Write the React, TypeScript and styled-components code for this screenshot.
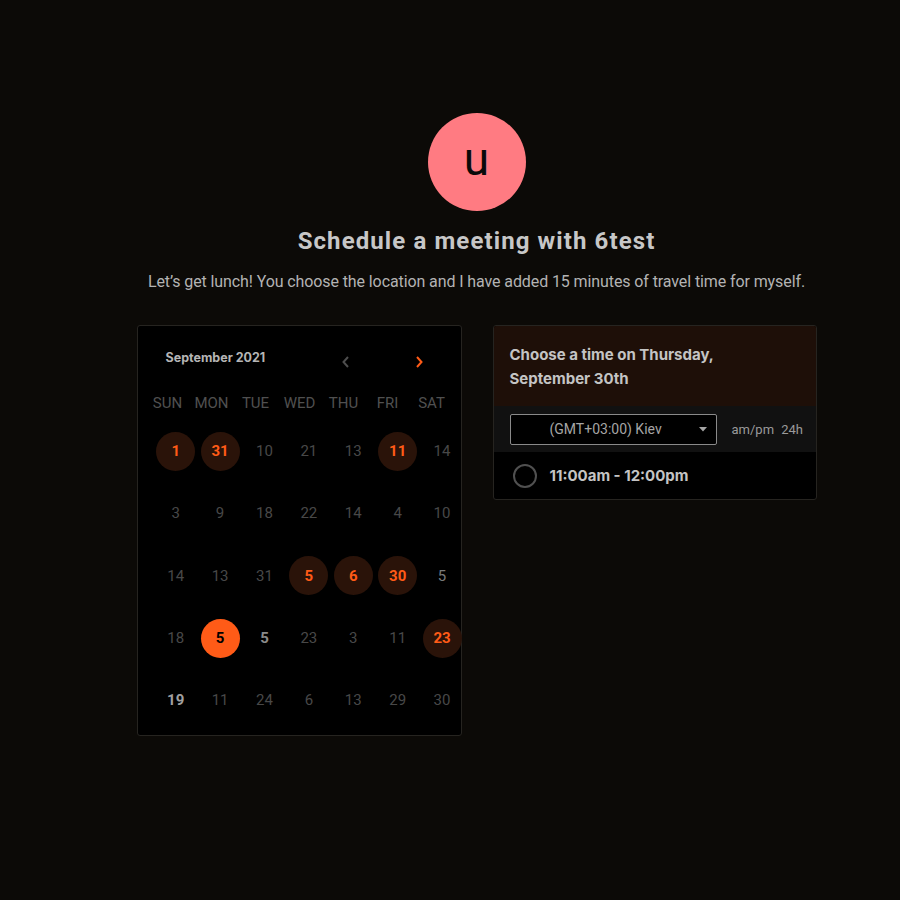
import React from "react";
import styled, { createGlobalStyle } from "styled-components";

const Global = createGlobalStyle`
  html, body { margin: 0; padding: 0; background: #0c0a07; }
  body { font-family: Roboto, "Liberation Sans", sans-serif; min-height: 900px; }
`;

const Page = styled.main`
  box-sizing: border-box;
  width: 900px;
  padding: 113px 0 0 53px;
  display: flex;
  flex-direction: column;
  align-items: center;
`;

const Avatar = styled.div`
  width: 98px;
  height: 98px;
  border-radius: 50%;
  background: #ff7b82;
  color: #0a0a0a;
  display: flex;
  align-items: center;
  justify-content: center;
  font-family: Roboto, sans-serif;
  font-size: 46px;
  line-height: 1;
  padding-bottom: 6px;
  box-sizing: border-box;
`;

const Title = styled.h1`
  margin: 15px 0 0;
  font-family: Roboto, sans-serif;
  font-weight: 700;
  font-size: 24px;
  letter-spacing: 1.1px;
  line-height: 30px;
  color: #c7c7c7;
`;

const Subtitle = styled.p`
  margin: 15px 0 0;
  font-size: 16px;
  letter-spacing: -0.1px;
  line-height: 22px;
  color: #b3b3b3;
`;

const Panels = styled.div`
  margin-top: 32px;
  display: flex;
  align-items: flex-start;
  gap: 31px;
`;

const Calendar = styled.section`
  box-sizing: border-box;
  width: 325px;
  height: 411px;
  background: #000;
  border: 1px solid #262420;
  border-radius: 3px;
  padding-top: 22px;
`;

const CalHeader = styled.div`
  display: flex;
  align-items: center;
  height: 24px;
  padding-left: 28px;
`;

const Month = styled.div`
  font-family: Inter, sans-serif;
  font-weight: 700;
  font-size: 12.5px;
  color: #b5b5b5;
  width: 172px;
  margin-top: -5px;
`;

const NavBtn = styled.div<{ $ml: number }>`
  width: 16px;
  height: 16px;
  display: flex;
  align-items: center;
  justify-content: center;
  margin-left: ${(p) => p.$ml}px;
  margin-top: 3px;
`;

const Weekdays = styled.div`
  display: grid;
  grid-template-columns: repeat(7, 44px);
  padding-left: 8px;
  margin-top: 21px;
`;

const Weekday = styled.div`
  text-align: center;
  font-size: 15px;
  line-height: 20px;
  color: #505050;
`;

const Days = styled.div`
  display: grid;
  grid-template-columns: repeat(7, 44.4px);
  grid-auto-rows: 62.3px;
  padding-left: 16px;
  margin-top: 7px;
`;

type Kind = "dim" | "hl" | "sel" | "light" | "mid" | "bold";

const Day = styled.div`
  display: flex;
  align-items: center;
  justify-content: center;
`;

const DayNum = styled.span<{ $k: Kind }>`
  width: 39px;
  height: 39px;
  border-radius: 50%;
  display: flex;
  align-items: center;
  justify-content: center;
  font-size: 15px;
  font-weight: ${(p) => (p.$k === "dim" || p.$k === "light" ? 400 : 700)};
  background: ${(p) =>
    p.$k === "hl" ? "#2a1309" : p.$k === "sel" ? "#ff5b17" : "transparent"};
  color: ${(p) =>
    p.$k === "hl"
      ? "#ff5b17"
      : p.$k === "sel"
      ? "#000"
      : p.$k === "light"
      ? "#7a7a7a"
      : p.$k === "mid"
      ? "#8a8a8a"
      : p.$k === "bold"
      ? "#a0a0a0"
      : "#484848"};
`;

const TimePanel = styled.section`
  box-sizing: border-box;
  width: 324px;
  border: 1px solid #262420;
  border-radius: 3px;
  overflow: hidden;
  background: #000;
`;

const TimeHeader = styled.div`
  background: #1e0f08;
  padding: 17px 16px 15px;
  font-family: Inter, sans-serif;
  font-weight: 700;
  font-size: 15px;
  line-height: 24px;
  color: #c4c4c4;
`;

const TzRow = styled.div`
  background: #111111;
  height: 46px;
  display: flex;
  align-items: center;
  padding-left: 16px;
`;

const Select = styled.div`
  box-sizing: border-box;
  width: 207px;
  height: 31px;
  border: 1px solid #8a8a8a;
  border-radius: 2px;
  background: #000;
  display: flex;
  align-items: center;
  padding-left: 39px;
  padding-right: 9px;
  font-size: 14px;
  color: #a5a5a5;
`;

const SelectText = styled.span`
  flex: 1;
`;

const Format = styled.div`
  margin-left: 15px;
  font-size: 13px;
  color: #9a9a9a;
  word-spacing: 4px;
`;

const Slot = styled.div`
  height: 47px;
  display: flex;
  align-items: center;
  padding-left: 19px;
  gap: 13px;
`;

const Radio = styled.span`
  box-sizing: border-box;
  width: 24px;
  height: 24px;
  border-radius: 50%;
  border: 2px solid #505050;
`;

const SlotText = styled.span`
  font-family: Inter, sans-serif;
  font-weight: 700;
  font-size: 15px;
  color: #c4c4c4;
`;

const weekdays = ["SUN", "MON", "TUE", "WED", "THU", "FRI", "SAT"];

const days: [string, Kind][] = [
  ["1", "hl"], ["31", "hl"], ["10", "dim"], ["21", "dim"], ["13", "dim"], ["11", "hl"], ["14", "dim"],
  ["3", "dim"], ["9", "dim"], ["18", "dim"], ["22", "dim"], ["14", "dim"], ["4", "dim"], ["10", "dim"],
  ["14", "dim"], ["13", "dim"], ["31", "dim"], ["5", "hl"], ["6", "hl"], ["30", "hl"], ["5", "light"],
  ["18", "dim"], ["5", "sel"], ["5", "mid"], ["23", "dim"], ["3", "dim"], ["11", "dim"], ["23", "hl"],
  ["19", "bold"], ["11", "dim"], ["24", "dim"], ["6", "dim"], ["13", "dim"], ["29", "dim"], ["30", "dim"],
];

const Chevron = ({ dir, color }: { dir: "l" | "r"; color: string }) => (
  <svg width="10" height="14" viewBox="0 0 10 14">
    <path
      d={dir === "l" ? "M7 2 L2.5 7 L7 12" : "M3 2 L7.5 7 L3 12"}
      fill="none"
      stroke={color}
      strokeWidth="2"
    />
  </svg>
);

export default function App() {
  return (
    <>
      <Global />
      <Page>
        <Avatar>u</Avatar>
        <Title>Schedule a meeting with 6test</Title>
        <Subtitle>
          Let’s get lunch! You choose the location and I have added 15 minutes of travel time for myself.
        </Subtitle>
        <Panels>
          <Calendar>
            <CalHeader>
              <Month>September 2021</Month>
              <NavBtn $ml={0}>
                <Chevron dir="l" color="#4e4e4e" />
              </NavBtn>
              <NavBtn $ml={57}>
                <Chevron dir="r" color="#ff5b17" />
              </NavBtn>
            </CalHeader>
            <Weekdays>
              {weekdays.map((w) => (
                <Weekday key={w}>{w}</Weekday>
              ))}
            </Weekdays>
            <Days>
              {days.map(([n, k], i) => (
                <Day key={i}>
                  <DayNum $k={k}>{n}</DayNum>
                </Day>
              ))}
            </Days>
          </Calendar>
          <TimePanel>
            <TimeHeader>
              Choose a time on Thursday,
              <br />
              September 30th
            </TimeHeader>
            <TzRow>
              <Select>
                <SelectText>(GMT+03:00) Kiev</SelectText>
                <svg width="8" height="5" viewBox="0 0 8 5">
                  <path d="M0 0 H8 L4 4.5 Z" fill="#a5a5a5" />
                </svg>
              </Select>
              <Format>am/pm 24h</Format>
            </TzRow>
            <Slot>
              <Radio />
              <SlotText>11:00am - 12:00pm</SlotText>
            </Slot>
          </TimePanel>
        </Panels>
      </Page>
    </>
  );
}
